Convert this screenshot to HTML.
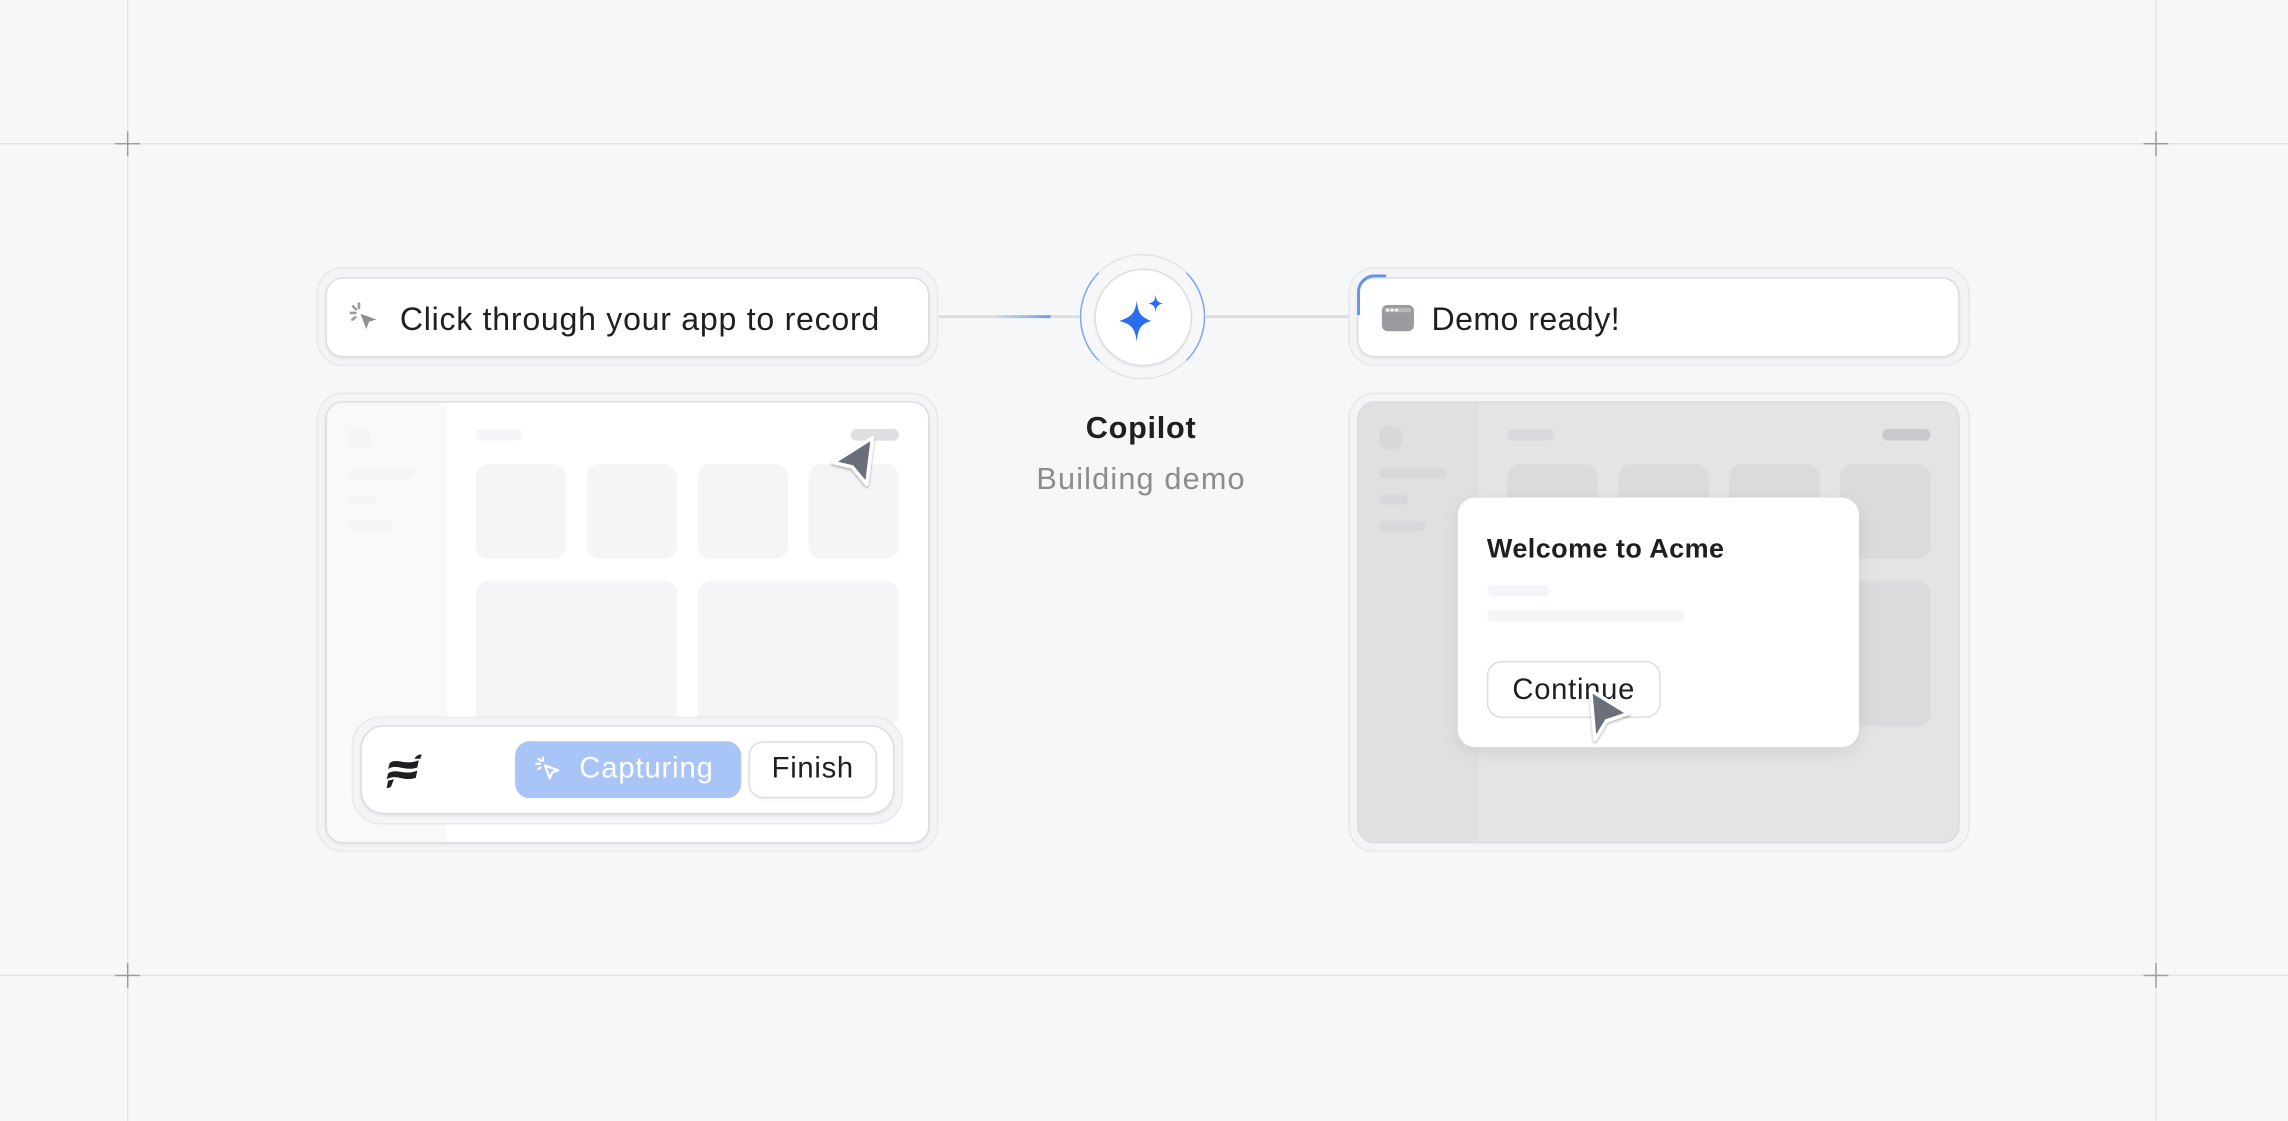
<!DOCTYPE html>
<html><head><meta charset="utf-8"><style>
html,body{margin:0;padding:0;background:#f6f7f9;overflow:hidden;width:2288px;height:1120px}
#s{position:absolute;left:0;top:0;width:1568px;height:768px;transform:scale(1.459184);transform-origin:0 0;font-family:"Liberation Sans",sans-serif;color:#1d1d1f}
.a{position:absolute;box-sizing:border-box}
.ring{border:1px solid #e6e8eb;background:#f3f4f6;border-radius:18px}
.card{background:#fff;border:1.5px solid #dcdde0;border-radius:12px;box-shadow:0 1px 2px rgba(0,0,0,.06)}
.sk{position:absolute;background:#f4f5f7;border-radius:5px}
.sk2{position:absolute;background:#dedfe1;border-radius:5px}
</style></head><body><div id="s">
<!-- grid -->
<div class="a" style="left:87px;top:0;width:1px;height:768px;background:#e2e4e8"></div>
<div class="a" style="left:1477px;top:0;width:1px;height:768px;background:#e2e4e8"></div>
<div class="a" style="left:0;top:98px;width:1568px;height:1px;background:#e2e4e8"></div>
<div class="a" style="left:0;top:668px;width:1568px;height:1px;background:#e2e4e8"></div>
<div class="a" style="left:79px;top:98px;width:17px;height:1px;background:#9a9ca0"></div><div class="a" style="left:87px;top:90px;width:1px;height:17px;background:#9a9ca0"></div>
<div class="a" style="left:1469px;top:98px;width:17px;height:1px;background:#9a9ca0"></div><div class="a" style="left:1477px;top:90px;width:1px;height:17px;background:#9a9ca0"></div>
<div class="a" style="left:79px;top:668px;width:17px;height:1px;background:#9a9ca0"></div><div class="a" style="left:87px;top:660px;width:1px;height:17px;background:#9a9ca0"></div>
<div class="a" style="left:1469px;top:668px;width:17px;height:1px;background:#9a9ca0"></div><div class="a" style="left:1477px;top:660px;width:1px;height:17px;background:#9a9ca0"></div>

<!-- connector line -->
<div class="a" style="left:643px;top:216px;width:707px;height:1.5px;background:#dcdee2"></div>
<div class="a" style="left:680px;top:215.5px;width:40px;height:2px;background:linear-gradient(90deg,rgba(100,150,240,0),#6b9cf0)"></div>

<!-- left pill -->
<div class="a ring" style="left:217px;top:183px;width:426px;height:68px"></div>
<div class="a card" style="left:223px;top:190px;width:414px;height:55px"></div>
<svg class="a" style="left:238px;top:206px" width="24" height="24" viewBox="0 0 24 24"><g stroke="#9a9ca0" stroke-width="1.8" stroke-linecap="round"><path d="M8 2v3M2.5 8.5h3M4 4l2 2M3.5 13l2-1.5"/></g><path d="M9 9l11 4-5 1.5-2 5z" fill="#8e9094"/></svg>
<div class="a" style="left:274px;top:205px;font-size:22px;letter-spacing:.5px;line-height:27px;color:#1f1f22">Click through your app to record</div>

<!-- left panel -->
<div class="a ring" style="left:217px;top:269px;width:426px;height:315px"></div>
<div class="a card" style="left:223px;top:275px;width:414px;height:303px;overflow:hidden">
  <div class="a" style="left:0;top:0;width:82px;height:303px;background:#f8f9fa"></div>
  <div class="sk" style="left:14px;top:16px;width:16px;height:16px;border-radius:6px"></div>
  <div class="sk" style="left:14px;top:45px;width:46px;height:7px"></div>
  <div class="sk" style="left:14px;top:63px;width:20px;height:7px"></div>
  <div class="sk" style="left:14px;top:81px;width:32px;height:7px"></div>
  <div class="sk" style="left:102px;top:18px;width:32px;height:8px"></div>
  <div class="sk2" style="left:359px;top:18px;width:33px;height:8px"></div>
  <div class="sk" style="left:102px;top:42px;width:62px;height:65px;border-radius:9px"></div>
  <div class="sk" style="left:178px;top:42px;width:62px;height:65px;border-radius:9px"></div>
  <div class="sk" style="left:254px;top:42px;width:62px;height:65px;border-radius:9px"></div>
  <div class="sk" style="left:330px;top:42px;width:62px;height:65px;border-radius:9px"></div>
  <div class="sk" style="left:102px;top:122px;width:138px;height:100px;border-radius:9px"></div>
  <div class="sk" style="left:254px;top:122px;width:138px;height:100px;border-radius:9px"></div>
</div>
<svg class="a" style="left:565px;top:295px" width="40" height="42" viewBox="0 0 40 42"><path d="M33 5L6 22l13 3 10 12z" fill="#6a6f7a" stroke="#fff" stroke-width="2.5" stroke-linejoin="round" style="filter:drop-shadow(0 1px 1px rgba(0,0,0,.3))"/></svg>
<!-- toolbar -->
<div class="a" style="left:241px;top:491px;width:378px;height:74px;border:1px solid #e6e8eb;background:#f3f4f6;border-radius:20px"></div>
<div class="a card" style="left:247px;top:497px;width:366px;height:61px;border-radius:16px"></div>
<svg class="a" style="left:263px;top:514px" width="30" height="30" viewBox="0 0 30 30"><g fill="#1f1f22"><path d="M4 9C9 5 14 11 24 7L23 12C14 15 9 9 3 13z"/><path d="M3 16C9 12 14 18 23 14L22 19C13 22 9 16 2 20z"/><path d="M21 6C22 4 24 3 26 3L25 6z"/><path d="M3 21L7 20 5 25C4 26 3 26 2 26z"/></g></svg>
<div class="a" style="left:353px;top:508px;width:155px;height:39px;background:#a9c5f8;border-radius:10px"></div>
<svg class="a" style="left:366px;top:517px" width="20" height="20" viewBox="0 0 20 20"><g stroke="#fff" stroke-width="1.5" stroke-linecap="round" fill="none"><path d="M6 2v2.5M1.5 6.5h2.5M3 3l1.5 1.5M3 10l1.5-1"/><path d="M7.5 7.5l9 3.5-4 1.2-1.7 4.3z" stroke-linejoin="round"/></g></svg>
<div class="a" style="left:397px;top:515px;font-size:20px;letter-spacing:.6px;line-height:24px;color:#fff">Capturing</div>
<div class="a" style="left:513px;top:508px;width:88px;height:39px;background:#fff;border:1.5px solid #dcdde0;border-radius:10px;box-shadow:0 1px 2px rgba(0,0,0,.06);font-size:20px;letter-spacing:.5px;line-height:37px;text-align:center;color:#1f1f22">Finish</div>

<!-- copilot -->
<div class="a" style="left:740px;top:174px;width:86px;height:86px;border-radius:50%;border:1px solid #e2e4e8;border-left-color:#7ba5f2;border-right-color:#7ba5f2;background:#f6f7f9"></div>
<div class="a" style="left:749.5px;top:183.5px;width:67px;height:67px;border-radius:50%;background:#fff;border:1.5px solid #dcdde0;box-shadow:0 1px 2px rgba(0,0,0,.06)"></div>
<svg class="a" style="left:763px;top:198px" width="40" height="40" viewBox="0 0 40 40"><path d="M16 8C17 16 18 19 26 22 18 24 17 28 16 36 15 28 13 24 4 22 13 19 15 16 16 8z" fill="#2a6df0"/><path d="M29 4C29.5 8 30 9 34 10 30 11 29.5 12 29 16 28.5 12 28 11 24 10 28 9 28.5 8 29 4z" fill="#2a6df0"/></svg>
<div class="a" style="left:682px;top:281px;width:200px;text-align:center;font-size:21px;letter-spacing:.5px;font-weight:bold;line-height:25px;color:#1f1f22">Copilot</div>
<div class="a" style="left:672px;top:316px;width:220px;text-align:center;font-size:21px;letter-spacing:.8px;line-height:25px;color:#8b8c8f">Building demo</div>

<!-- right pill -->
<div class="a ring" style="left:924px;top:183px;width:426px;height:68px"></div>
<div class="a card" style="left:930px;top:190px;width:413px;height:55px"></div>
<div class="a" style="left:930px;top:188px;width:20px;height:28px;border-top:2px solid #5e93f0;border-left:2px solid #5e93f0;border-top-left-radius:12px;border-right:0;border-bottom:0"></div>
<svg class="a" style="left:946px;top:207px" width="24" height="22" viewBox="0 0 24 22"><rect x="1" y="2" width="22" height="18" rx="4" fill="#9a9b9e"/><rect x="3" y="4" width="18" height="3" rx="1" fill="#fff" opacity=".3"/><g fill="#fff"><circle cx="5" cy="5.5" r="1"/><circle cx="8" cy="5.5" r="1"/><circle cx="11" cy="5.5" r="1"/></g></svg>
<div class="a" style="left:981px;top:205px;font-size:22px;letter-spacing:.3px;line-height:27px;color:#1f1f22">Demo ready!</div>

<!-- right panel -->
<div class="a ring" style="left:924px;top:269px;width:426px;height:315px"></div>
<div class="a" style="left:930px;top:275px;width:413px;height:303px;border-radius:12px;background:#e4e4e5;border:1.5px solid #dadbdd;overflow:hidden">
  <div class="a" style="left:0;top:0;width:82px;height:303px;background:#e0e0e1"></div>
  <div class="sk2" style="left:14px;top:16px;width:16px;height:16px;border-radius:6px;background:#d8d8da"></div>
  <div class="sk2" style="left:14px;top:45px;width:46px;height:7px;background:#d8d8da"></div>
  <div class="sk2" style="left:14px;top:63px;width:20px;height:7px;background:#d8d8da"></div>
  <div class="sk2" style="left:14px;top:81px;width:32px;height:7px;background:#d8d8da"></div>
  <div class="sk2" style="left:102px;top:18px;width:32px;height:8px;background:#dadadc"></div>
  <div class="sk2" style="left:359px;top:18px;width:33px;height:8px;background:#c9c9cb"></div>
  <div class="sk2" style="left:102px;top:42px;width:62px;height:65px;border-radius:9px;background:#dbdbdd"></div>
  <div class="sk2" style="left:178px;top:42px;width:62px;height:65px;border-radius:9px;background:#dbdbdd"></div>
  <div class="sk2" style="left:254px;top:42px;width:62px;height:65px;border-radius:9px;background:#dbdbdd"></div>
  <div class="sk2" style="left:330px;top:42px;width:62px;height:65px;border-radius:9px;background:#dbdbdd"></div>
  <div class="sk2" style="left:102px;top:122px;width:138px;height:100px;border-radius:9px;background:#dbdbdd"></div>
  <div class="sk2" style="left:254px;top:122px;width:138px;height:100px;border-radius:9px;background:#dbdbdd"></div>
</div>
<div class="a" style="left:999px;top:341px;width:275px;height:171px;background:#fff;border-radius:12px;box-shadow:0 4px 12px rgba(0,0,0,.08)"></div>
<div class="a" style="left:1019px;top:365px;font-size:18.5px;letter-spacing:.3px;font-weight:bold;line-height:22px;color:#1f1f22">Welcome to Acme</div>
<div class="sk" style="left:1019px;top:401px;width:43px;height:8px"></div>
<div class="sk" style="left:1019px;top:418px;width:135px;height:8px"></div>
<div class="a" style="left:1019px;top:453px;width:119px;height:39px;border:1.5px solid #dcdde0;border-radius:10px;background:#fff;font-size:20px;letter-spacing:.5px;line-height:38px;text-align:center;color:#1f1f22">Continue</div>
<svg class="a" style="left:1084px;top:468px" width="40" height="44" viewBox="0 0 40 44"><path d="M6 5l3 34 8-13 15-5z" fill="#6a6f7a" stroke="#fff" stroke-width="2.5" stroke-linejoin="round" style="filter:drop-shadow(0 1px 1px rgba(0,0,0,.3))"/></svg>
</div></body></html>
